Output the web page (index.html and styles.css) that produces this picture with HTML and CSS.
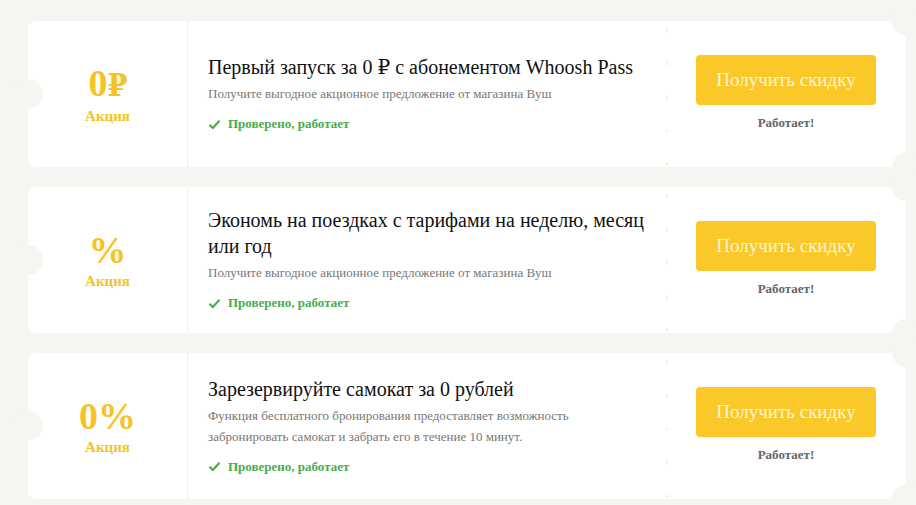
FILE: index.html
```html
<!DOCTYPE html>
<html lang="ru">
<head>
<meta charset="utf-8">
<title>Промокоды Whoosh</title>
<link rel="stylesheet" href="styles.css">
</head>
<body>
<main class="offers">

  <article class="offer">
    <div class="offer-badge">
      <div class="offer-value">0<span class="rub">₽</span></div>
      <div class="offer-type">Акция</div>
    </div>
    <div class="offer-body">
      <h2 class="offer-title">Первый запуск за 0 ₽ с абонементом Whoosh Pass</h2>
      <p class="offer-desc">Получите выгодное акционное предложение от магазина Вуш</p>
      <div class="offer-check">
        <svg class="check-icon" viewBox="0 0 14 12" width="13" height="11"><path d="M1.5 6.2 5.2 9.8 12.5 2" fill="none" stroke="currentColor" stroke-width="2.4"/></svg>
        Проверено, работает
      </div>
    </div>
    <div class="offer-action">
      <a class="offer-btn" href="#">Получить скидку</a>
      <div class="offer-status">Работает!</div>
    </div>
  </article>

  <article class="offer">
    <div class="offer-badge">
      <div class="offer-value">%</div>
      <div class="offer-type">Акция</div>
    </div>
    <div class="offer-body">
      <h2 class="offer-title">Экономь на поездках с тарифами на неделю, месяц или год</h2>
      <p class="offer-desc">Получите выгодное акционное предложение от магазина Вуш</p>
      <div class="offer-check">
        <svg class="check-icon" viewBox="0 0 14 12" width="13" height="11"><path d="M1.5 6.2 5.2 9.8 12.5 2" fill="none" stroke="currentColor" stroke-width="2.4"/></svg>
        Проверено, работает
      </div>
    </div>
    <div class="offer-action">
      <a class="offer-btn" href="#">Получить скидку</a>
      <div class="offer-status">Работает!</div>
    </div>
  </article>

  <article class="offer">
    <div class="offer-badge">
      <div class="offer-value">0%</div>
      <div class="offer-type">Акция</div>
    </div>
    <div class="offer-body">
      <h2 class="offer-title">Зарезервируйте самокат за 0 рублей</h2>
      <p class="offer-desc">Функция бесплатного бронирования предоставляет возможность забронировать самокат и забрать его в течение 10 минут.</p>
      <div class="offer-check">
        <svg class="check-icon" viewBox="0 0 14 12" width="13" height="11"><path d="M1.5 6.2 5.2 9.8 12.5 2" fill="none" stroke="currentColor" stroke-width="2.4"/></svg>
        Проверено, работает
      </div>
    </div>
    <div class="offer-action">
      <a class="offer-btn" href="#">Получить скидку</a>
      <div class="offer-status">Работает!</div>
    </div>
  </article>

</main>
</body>
</html>
```
FILE: styles.css
```css
* { box-sizing: border-box; }

html, body {
  margin: 0;
  background: #f6f5f1;
}

body {
  font-family: "Liberation Serif", "Times New Roman", "DejaVu Serif", serif;
  color: #111;
}

.offers {
  display: flex;
  flex-direction: column;
  gap: 20px;
  padding: 21px 10px 0 28px;
}

/* ticket-shaped card */
.offer {
  position: relative;
  display: flex;
  min-height: 146px;
  background: #fff;
  border-radius: 8px;
}

/* left coupon block with the half-circle notch */
.offer-badge {
  position: relative;
  flex: 0 0 160px;
  display: flex;
  flex-direction: column;
  align-items: center;
  justify-content: center;
  border-right: 1px solid #f1f0ec;
  color: #f5c424;
  font-weight: bold;
  padding-bottom: 1px;
}

.offer-badge::before {
  content: "";
  position: absolute;
  left: -15px;
  top: 50%;
  width: 30px;
  height: 30px;
  margin-top: -15px;
  border-radius: 50%;
  background: #f6f5f1;
}

.offer-value {
  font-size: 38px;
  line-height: 40px;
}

.rub {
  font-family: "DejaVu Serif Condensed", "DejaVu Serif", serif;
  font-size: 32px;
  letter-spacing: -1px;
}

.offer-type {
  font-size: 15px;
  line-height: 18px;
  margin-top: 2px;
}

.offer-body {
  flex: 1;
  display: flex;
  flex-direction: column;
  justify-content: center;
  padding: 10px 16px 10px 20px;
}

.offer-title {
  margin: 0;
  font-size: 20px;
  font-weight: normal;
  line-height: 26px;
  color: #111;
}

.offer-desc {
  margin: 3px 0 0;
  font-size: 13px;
  line-height: 21px;
  color: #777;
}

.offer-check {
  display: flex;
  align-items: center;
  gap: 7px;
  margin-top: 10px;
  font-size: 13px;
  line-height: 20px;
  font-weight: bold;
  color: #48ad4c;
}

.check-icon { color: #48ad4c; }

/* right block: perforation dots and notched corners */
.offer-action {
  position: relative;
  flex: 0 0 240px;
  display: flex;
  flex-direction: column;
  align-items: center;
  justify-content: center;
  padding-bottom: 1px;
  background-image: radial-gradient(circle, #efeee9 1.6px, transparent 2px);
  background-size: 6px 33.5px;
  background-repeat: repeat-y;
  background-position: -3px 26px;
}

.offer-action::before,
.offer-action::after {
  content: "";
  position: absolute;
  right: -14px;
  width: 28px;
  height: 28px;
  border-radius: 50%;
  background: #f6f5f1;
}

.offer-action::before { top: -14px; }
.offer-action::after { bottom: -14px; }

.offer-btn {
  display: flex;
  align-items: center;
  justify-content: center;
  width: 180px;
  height: 50px;
  border-radius: 4px;
  background: #fbc82a;
  color: #fdf4d6;
  font-size: 19px;
  text-decoration: none;
}

.offer-status {
  margin-top: 9px;
  font-size: 13px;
  line-height: 18px;
  font-weight: bold;
  color: #666;
}
```
